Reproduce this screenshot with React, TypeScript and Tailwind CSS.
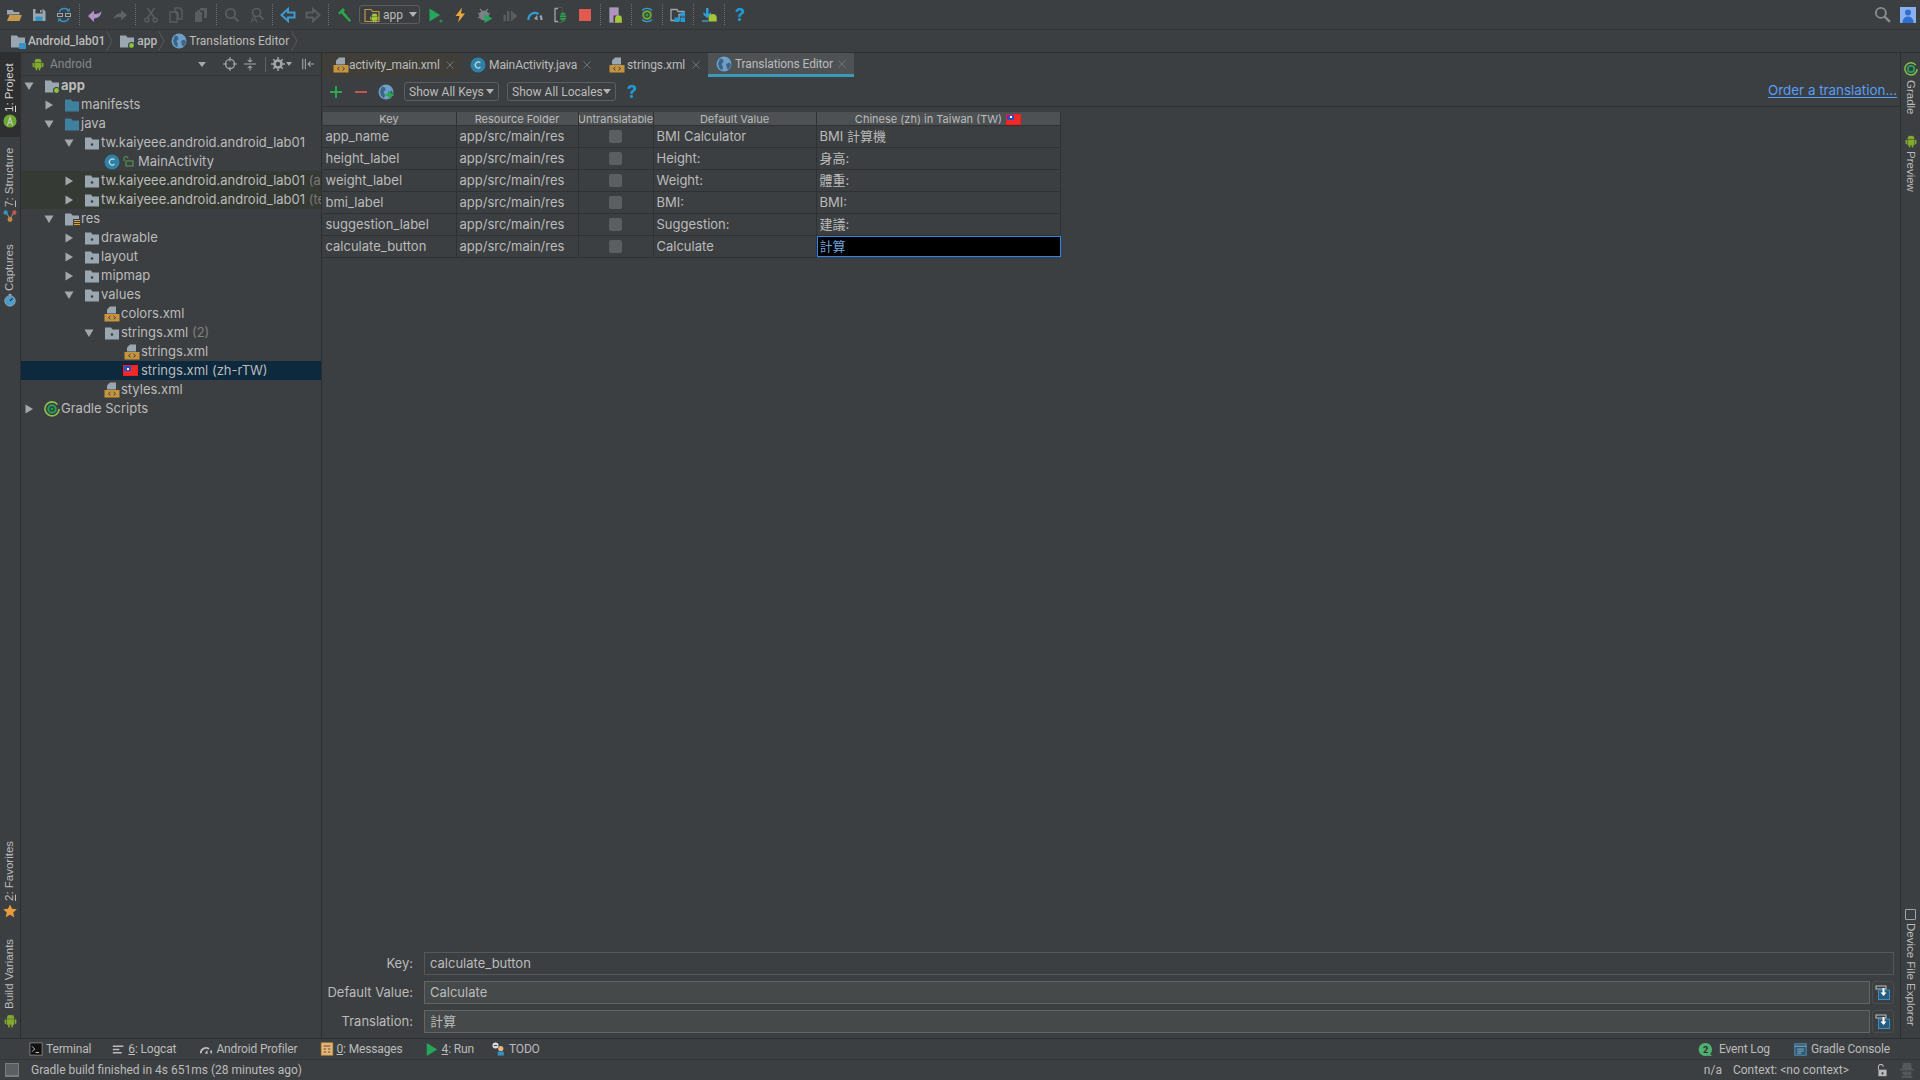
import React from "react";

const G = "#9aa7b0";
const D = "#5a5d5f";

function S({ s = 16, children, className = "" }: { s?: number; children: React.ReactNode; className?: string }) {
  return (
    <svg width={s} height={s} viewBox="0 0 16 16" className={"shrink-0 " + className}>
      {children}
    </svg>
  );
}

function Folder({ c = G, dot, lines, blue }: { c?: string; dot?: boolean; lines?: boolean; blue?: boolean }) {
  return (
    <S>
      <path d="M1 2.5h6l1.5 2H15v10H1z" fill={c} />
      {dot && <circle cx="8" cy="9.5" r="1.3" fill="#3c3f41" />}
      {lines && (
        <>
          <rect x="9" y="8" width="7" height="8" fill="#3c3f41" />
          <path d="M10 9.5h6M10 11.5h6M10 13.5h6" stroke="#e0a030" strokeWidth="1" />
        </>
      )}
      {blue && <rect x="9" y="10" width="7" height="6" fill="#3592c4" />}
    </S>
  );
}

function AppFolder() {
  return (
    <S>
      <path d="M1 2.5h6l1.5 2H15v10H1z" fill={G} />
      <circle cx="12.5" cy="12.5" r="3.5" fill="#3c3f41" />
      <circle cx="12.5" cy="12.5" r="2.4" fill="#8fc23a" />
    </S>
  );
}

function Xml() {
  return (
    <S>
      <path d="M6 0.5h6v7H3V3.5z" fill={G} />
      <rect x="0.5" y="8" width="15" height="7.5" fill="#c7943e" />
      <path d="M6.5 10l-2 1.7 2 1.7M9.5 10l2 1.7-2 1.7" stroke="#3c3f41" strokeWidth="1" fill="none" />
    </S>
  );
}

function ClassIcon() {
  return (
    <S>
      <circle cx="8" cy="8" r="7.5" fill="#2f82a6" />
      <path d="M10.4 5.8a3 3 0 1 0 0 4.4" stroke="#c7dbe5" strokeWidth="1.2" fill="none" />
    </S>
  );
}

function Globe({ s = 16, plus }: { s?: number; plus?: boolean }) {
  return (
    <S s={s}>
      <circle cx="8" cy="8" r="7.5" fill="#6f9ec6" />
      <path d="M4 2.5l3 1 .5 2.5-2 2 1.5 3-1 3.5-3-3-1-4zM10 8l3.5-1.5L15 9l-2 4.5-2-1z" fill="#3a6488" />
      {plus && <path d="M11.5 7v8M7.5 11h8" stroke="#2aa84a" strokeWidth="2" />}
    </S>
  );
}

function Android({ s = 16, c = "#84a92f" }: { s?: number; c?: string }) {
  return (
    <S s={s}>
      <path d="M4 6a4 4 0 0 1 8 0z" fill={c} />
      <path d="M5.2 2l1 1.6M10.8 2l-1 1.6" stroke={c} strokeWidth=".8" />
      <rect x="4" y="6.6" width="8" height="6" fill={c} />
      <rect x="1.8" y="6.6" width="1.6" height="5" rx=".8" fill={c} />
      <rect x="12.6" y="6.6" width="1.6" height="5" rx=".8" fill={c} />
      <rect x="5.4" y="12" width="1.8" height="3.4" rx=".9" fill={c} />
      <rect x="8.8" y="12" width="1.8" height="3.4" rx=".9" fill={c} />
    </S>
  );
}

function Flag() {
  return (
    <span className="flex h-[11px] w-[15px] shrink-0 border border-[#ff1a1a] bg-[#ee2a2a]">
      <span className="flex h-[5px] w-[7px] items-center justify-center bg-[#2c4fc0]">
        <span className="h-[2px] w-[2px] bg-white" />
      </span>
    </span>
  );
}

function Arrow({ open }: { open?: boolean }) {
  return (
    <svg width="10" height="10" viewBox="0 0 10 10" className="shrink-0">
      {open ? <path d="M0.5 1.5h9L5 9z" fill="#a4a7a9" /> : <path d="M1.5 0.5v9L9 5z" fill="#a4a7a9" />}
    </svg>
  );
}

function Sep() {
  return (
    <div className="flex h-full w-[6px] shrink-0 items-center justify-center">
      <div className="h-[21px] w-0 border-l border-dotted border-[#6d7072]" />
    </div>
  );
}

function Btn({ children }: { children: React.ReactNode }) {
  return <div className="flex h-full w-[25px] shrink-0 items-center justify-center">{children}</div>;
}

const Toolbar = () => (
  <div className="flex h-[30px] shrink-0 items-center border-b border-[#323435] pl-[1.5px] pr-[5px]">
    <Btn>
      <S>
        <path d="M1 3h5.5l1.5 2h5.5v2.5H1z" fill={G} />
        <path d="M3.5 8H16l-2.5 6H1z" fill="#c79a4c" />
      </S>
    </Btn>
    <Btn>
      <S>
        <path d="M2 2h10l2.5 2.5V14H2z" fill={G} />
        <rect x="4.5" y="2" width="7" height="4.5" fill="#3c3f41" />
        <rect x="9" y="3" width="1.5" height="2.5" fill={G} />
        <rect x="4.5" y="9.5" width="7" height="4.5" fill="#3592c4" />
      </S>
    </Btn>
    <Btn>
      <S>
        <path d="M3 5a6 6 0 0 1 10-1.5M13 11a6 6 0 0 1-10 1.5" stroke="#3592c4" strokeWidth="1.4" fill="none" />
        <path d="M13.8 1v3.6h-3.6zM2.2 15v-3.6h3.6z" fill="#3592c4" />
        <rect x="1.5" y="6.5" width="5" height="3" fill="none" stroke={G} />
        <rect x="9.5" y="6.5" width="5" height="3" fill="none" stroke={G} />
      </S>
    </Btn>
    <Sep />
    <Btn>
      <S>
        <path d="M7 3.5V7c3 0 5 0 7.5-3-.5 5-3 7-7.5 7.5V15L1 9z" fill="#b490c7" />
      </S>
    </Btn>
    <Btn>
      <S>
        <path d="M9 3v3.5C5 6.5 3 8 1.5 12 4 10 6 9.8 9 10v3.5L15 8z" fill="#5f6264" />
      </S>
    </Btn>
    <Sep />
    <Btn>
      <S>
        <path d="M4.5 1l7 10M11.5 1l-7 10" stroke={D} strokeWidth="1.6" />
        <circle cx="4" cy="13" r="2" fill="none" stroke={D} strokeWidth="1.4" />
        <circle cx="12" cy="13" r="2" fill="none" stroke={D} strokeWidth="1.4" />
      </S>
    </Btn>
    <Btn>
      <S>
        <path d="M2 5h5l2 2v8H2zM7 1h5l2 2v9h-4V6L7 3.5z" fill="none" stroke={D} strokeWidth="1.4" />
      </S>
    </Btn>
    <Btn>
      <S>
        <path d="M2 5h7v10H2z" fill={D} />
        <path d="M7 1h7v10h-3V3.5H7z" fill={D} />
        <rect x="4" y="3" width="3" height="3" fill={D} />
      </S>
    </Btn>
    <Sep />
    <Btn>
      <S>
        <circle cx="6.5" cy="6.5" r="4.7" fill="none" stroke={D} strokeWidth="1.8" />
        <path d="M10 10l4.5 4.5" stroke={D} strokeWidth="2" />
      </S>
    </Btn>
    <Btn>
      <S>
        <circle cx="7.5" cy="5.5" r="4" fill="none" stroke={D} strokeWidth="1.6" />
        <path d="M10.5 8.5l4 4" stroke={D} strokeWidth="1.8" />
        <path d="M2 15.5L5 8l3 7.5M3 13h4" fill="none" stroke={D} strokeWidth="1" />
      </S>
    </Btn>
    <Sep />
    <Btn>
      <S>
        <path d="M8 2L1.5 8 8 14v-3.5h6.5v-5H8z" fill="none" stroke="#3d9bd0" strokeWidth="2" />
      </S>
    </Btn>
    <Btn>
      <S>
        <path d="M8 2l6.5 6L8 14v-3.5H1.5v-5H8z" fill="none" stroke={D} strokeWidth="2" />
      </S>
    </Btn>
    <Sep />
    <Btn>
      <S>
        <path d="M5.5 2.5L2 6l1.5 1.5L5 6l8.5 9 1.5-1.5L7.500 4.500 9 3 7 1z" fill="#2aa84a" />
      </S>
    </Btn>
    <div className="mx-[2.5px] flex h-[19px] w-[61px] shrink-0 items-center rounded-[3px] border border-[#5c5f61] pl-[4px]">
      <span className="relative h-[16px] w-[16px] shrink-0">
        <S>
          <path d="M1 2.5h6l1.5 2H15v10H1z" fill="none" stroke="#c7943e" strokeWidth="1.2" />
        </S>
        <span className="absolute left-[5px] top-[5px]">
          <Android s={11} c="#a4c639" />
        </span>
      </span>
      <span className="ml-[3px] [font-family:Roboto,sans-serif] text-[12px] text-[#bbbbbb]">app</span>
      <svg width="8" height="5" viewBox="0 0 8 5" className="ml-[6px]">
        <path d="M0 0h8L4 5z" fill="#b0b3b5" />
      </svg>
    </div>
    <Btn>
      <S>
        <path d="M2.5 1.5L13 8 2.5 14.5z" fill="#26a65b" />
        <circle cx="14" cy="14" r="1.6" fill="#2d8a4a" />
      </S>
    </Btn>
    <Btn>
      <S>
        <path d="M10 0.5L3.5 9h4L6 15.5 13 6.5H9z" fill="#e9a63c" />
      </S>
    </Btn>
    <Btn>
      <S>
        <circle cx="7" cy="8.5" r="5" fill="#7e8183" />
        <path d="M3 2l2.4 2.6M11 2L8.6 4.6M1 6l2 1M1 11l2-1M13 6l-2 1" stroke="#7e8183" strokeWidth="1.2" />
        <path d="M7.5 7l8 4.5-8 4.5z" fill="#26a65b" />
      </S>
    </Btn>
    <Btn>
      <S>
        <rect x="1.5" y="8" width="2.4" height="6" fill={D} />
        <rect x="5" y="4" width="2.4" height="10" fill={D} />
        <path d="M9 3.5L15.5 9 9 14.5z" fill={D} />
      </S>
    </Btn>
    <Btn>
      <S>
        <path d="M1.500 13a6.500 6.500 0 0 1 10-6" fill="none" stroke="#2f9fd6" strokeWidth="2.2" />
        <path d="M13.3 8.500a6.500 6.500 0 0 1 1.200 4.500" fill="none" stroke={G} strokeWidth="2.2" />
        <path d="M7 12l3-4 .8 5z" fill={G} />
      </S>
    </Btn>
    <Btn>
      <S>
        <path d="M3 1.500h6.500v13H3z" fill="none" stroke={G} strokeWidth="1.3" />
        <rect x="6" y="1" width="4" height="14" fill="#3c3f41" />
        <ellipse cx="11" cy="10" rx="3" ry="4.500" fill="#2aa84a" />
        <path d="M7 8h8M7 10.500h8M7 13h8" stroke="#3c3f41" strokeWidth=".8" />
      </S>
    </Btn>
    <Btn>
      <div className="h-[12px] w-[12px] bg-[#e05a50]" />
    </Btn>
    <Sep />
    <Btn>
      <S>
        <rect x="2" y="1" width="8" height="14" fill="#b490c7" stroke={G} strokeWidth="1.2" />
        <rect x="5.5" y="8.500" width="10" height="7" fill="#3c3f41" />
        <g transform="translate(5 7) scale(.68)">
          <path d="M3 7a5 5 0 0 1 10 0v6H3z" fill="#a4c639" />
        </g>
      </S>
    </Btn>
    <Sep />
    <Btn>
      <S>
        <circle cx="8" cy="8" r="3.800" fill="none" stroke="#6da833" strokeWidth="2" />
        <circle cx="8" cy="8" r="1.500" fill="#22a85c" />
        <path d="M3 3.500a7 7 0 0 1 10 0M3 12.500a7 7 0 0 0 10 0" stroke="#2f9fd6" strokeWidth="1.4" fill="none" />
      </S>
    </Btn>
    <Sep />
    <Btn>
      <S>
        <path d="M1 2.500h6l1 2h6v3H9v6H1z" fill="none" stroke={G} strokeWidth="1.3" />
        <rect x="10.500" y="5.500" width="4.500" height="4" fill="#1f9ddb" />
        <rect x="4.500" y="10.500" width="4.500" height="4.500" fill="#1f9ddb" />
        <rect x="10.500" y="10.500" width="4.500" height="4.500" fill="#1f9ddb" />
      </S>
    </Btn>
    <Sep />
    <Btn>
      <S>
        <path d="M5 1h2.500v6L10 5v3l-3.700 3L2.500 8V5L5 7z" fill="#2f9fd6" />
        <path d="M1 14h6" stroke="#2f9fd6" strokeWidth="1.5" />
        <g transform="translate(7 6.500) scale(.58)">
          <path d="M1 8a7 7 0 0 1 14 0v6H1z" fill="#a4c639" />
        </g>
      </S>
    </Btn>
    <Sep />
    <Btn>
      <span className="text-[18px] font-bold leading-none text-[#1d9bd6]">?</span>
    </Btn>
    <div className="flex-1" />
    <S s={17}>
      <circle cx="6.500" cy="6.500" r="4.700" fill="none" stroke="#8a8d8f" strokeWidth="1.800" />
      <path d="M10 10l5 5" stroke="#8a8d8f" strokeWidth="2.200" />
    </S>
    <div className="ml-[9px] mr-[-0.5px] h-[16px] w-[16px] shrink-0">
      <S>
        <rect width="16" height="16" fill="#8ab0ee" />
        <circle cx="8" cy="5.500" r="3" fill="#2f6ed0" />
        <path d="M2.500 16c0-4.500 2.500-6.500 5.500-6.500s5.500 2 5.500 6.500z" fill="#2f6ed0" />
      </S>
    </div>
  </div>
);

function Chev() {
  return (
    <svg width="7" height="20" viewBox="0 0 7 20" className="shrink-0">
      <path d="M0.500 0L6 10 0.500 20" stroke="#58595b" fill="none" />
    </svg>
  );
}

const NavBar = () => (
  <div className="flex h-[23px] shrink-0 items-center border-b border-[#2e2f30] pl-[10px] [font-family:Roboto,sans-serif] text-[12px]">
    <Folder blue />
    <span className="ml-[2px] font-medium">Android_lab01</span>
    <span className="ml-[1px] mr-[6px]">
      <Chev />
    </span>
    <AppFolder />
    <span className="ml-[2px] font-medium">app</span>
    <span className="ml-[1px] mr-[6px]">
      <Chev />
    </span>
    <Globe />
    <span className="ml-[2px]">Translations Editor</span>
    <span className="ml-[2px]">
      <Chev />
    </span>
  </div>
);

function VText({ h, children }: { h: number; children: React.ReactNode }) {
  return (
    <span
      className="flex rotate-180 items-center justify-start whitespace-nowrap [font-family:'Liberation_Sans',sans-serif] text-[11.5px] [writing-mode:vertical-rl]"
      style={{ height: h }}
    >
      {children}
    </span>
  );
}

const LeftStripe = () => (
  <div className="flex w-[21px] shrink-0 flex-col items-center border-r border-[#2b2d2e] text-[#bbbbbb]">
    <div className="flex h-[84px] w-full flex-col items-center bg-[#2d2f31] pt-[7px] text-[#d4d4d4]">
      <VText h={52}>
        <span>
          <u>1</u>: Project
        </span>
      </VText>
      <span className="mt-[2px]">
        <S s={14}>
          <circle cx="8" cy="8" r="7.500" fill="#6da833" />
          <path d="M5 13l3-9 3 9M6 10h4" stroke="#ccc" strokeWidth="1.200" fill="none" />
        </S>
      </span>
    </div>
    <div className="mt-[11px] flex flex-col items-center">
      <VText h={59}>
        <span>
          <u>7</u>: Structure
        </span>
      </VText>
      <span className="mt-[2px]">
        <S s={14}>
          <path d="M3.500 4L8 11l4.500-7" stroke="#9aa7b0" fill="none" />
          <circle cx="3" cy="4" r="2.500" fill="#3592c4" />
          <circle cx="13" cy="4" r="2.500" fill="#c75450" />
          <circle cx="8" cy="12" r="2.800" fill="#c7873e" />
        </S>
      </span>
    </div>
    <div className="mt-[21px] flex flex-col items-center">
      <VText h={47}>Captures</VText>
      <span className="mt-[2px]">
        <S s={14}>
          <circle cx="8" cy="9" r="6" fill="#4a9ccb" stroke="#9aa7b0" />
          <path d="M8 9l3-3" stroke="#223" strokeWidth="1.200" />
          <rect x="6.500" y="1" width="3" height="2" fill="#9aa7b0" />
        </S>
      </span>
    </div>
    <div className="flex-1" />
    <div className="flex flex-col items-center">
      <VText h={59}>
        <span>
          <u>2</u>: Favorites
        </span>
      </VText>
      <span className="mt-[3px]">
        <S s={14}>
          <path d="M8 .5l2.300 5 5.500.6-4.100 3.700 1.200 5.400L8 12.400 3.100 15.200l1.200-5.400L.2 6.100l5.500-.6z" fill="#e89b3c" />
        </S>
      </span>
    </div>
    <div className="mb-[10px] mt-[21px] flex flex-col items-center">
      <VText h={70}>Build Variants</VText>
      <span className="mt-[4px]">
        <Android s={15} />
      </span>
    </div>
  </div>
);

function TreeRow({
  indent,
  arrow,
  icon,
  children,
}: {
  indent: number;
  arrow?: "open" | "closed";
  icon: React.ReactNode;
  children: React.ReactNode;
}) {
  return (
    <div className="flex h-[19px] items-center overflow-hidden whitespace-nowrap" style={{ paddingLeft: indent }}>
      <span className="flex w-[20px] shrink-0 items-center">{arrow && <Arrow open={arrow === "open"} />}</span>
      <span className="flex w-[17px] shrink-0 items-center">{icon}</span>
      <span>{children}</span>
    </div>
  );
}

const Tree = () => (
  <div className="flex w-[301px] shrink-0 flex-col border-r border-[#2b2d2e] text-[13px]">
    <div className="flex h-[23px] shrink-0 items-center border-b border-[#323435] pl-[10px] text-[#85888a]">
      <Android s={14} />
      <span className="ml-[5px] [font-family:Roboto,sans-serif] text-[12px]">Android</span>
      <svg width="8" height="5" viewBox="0 0 8 5" className="ml-[106px]">
        <path d="M0 0h8L4 5z" fill="#a4a7a9" />
      </svg>
      <span className="ml-[17px]">
        <S s={14}>
          <circle cx="8" cy="8" r="5.200" fill="none" stroke="#a4a7a9" strokeWidth="1.500" />
          <path d="M8 0v5M8 11v5M0 8h5M11 8h5" stroke="#a4a7a9" strokeWidth="1.300" />
        </S>
      </span>
      <span className="ml-[6px]">
        <S s={14}>
          <path d="M1 8h14M8 .5v4.500M8 15.500V11M5.500 3.500L8 5.500l2.500-2M5.500 12.500L8 10.500l2.500 2" stroke="#a4a7a9" strokeWidth="1.200" fill="none" />
        </S>
      </span>
      <div className="ml-[8px] h-[15px] w-[1px] bg-[#606365]" />
      <span className="ml-[5px]">
        <S s={14}>
          <circle cx="8" cy="8" r="4" fill="none" stroke="#a4a7a9" strokeWidth="3" />
          <path d="M8 0v3M8 13v3M0 8h3M13 8h3M2.500 2.500l2 2M11.500 11.500l2 2M2.500 13.500l2-2M11.500 4.500l2-2" stroke="#a4a7a9" strokeWidth="1.600" />
        </S>
      </span>
      <svg width="6" height="4" viewBox="0 0 6 4" className="ml-[1px]">
        <path d="M0 0h6L3 4z" fill="#a4a7a9" />
      </svg>
      <span className="ml-[9px]">
        <S s={14}>
          <path d="M2 2v12M5 2v12M15 8H8M11 5L8 8l3 3" stroke="#a4a7a9" strokeWidth="1.200" fill="none" />
        </S>
      </span>
    </div>
    <div className="flex-1">
      <TreeRow indent={3} arrow="open" icon={<AppFolder />}>
        <span className="font-bold">app</span>
      </TreeRow>
      <TreeRow indent={23} arrow="closed" icon={<Folder c="#40809f" />}>
        manifests
      </TreeRow>
      <TreeRow indent={23} arrow="open" icon={<Folder c="#40809f" />}>
        java
      </TreeRow>
      <TreeRow indent={43} arrow="open" icon={<Folder dot />}>
        tw.kaiyeee.android.android_lab01
      </TreeRow>
      <div className="flex h-[19px] items-center whitespace-nowrap pl-[83px]">
        <ClassIcon />
        <span className="ml-[3px] flex w-[15px] items-center">
          <svg width="11" height="11" viewBox="0 0 11 11" className="shrink-0">
            <rect x="3" y="5" width="7" height="5" fill="none" stroke="#5a9e5a" />
            <path d="M1 5V2.500a2 2 0 0 1 4 0" fill="none" stroke="#5a9e5a" />
          </svg>
        </span>
        MainActivity
      </div>
      <div className="bg-[#363a34]">
        <TreeRow indent={43} arrow="closed" icon={<Folder dot />}>
          tw.kaiyeee.android.android_lab01 <span className="text-[#787878]">(androidTest)</span>
        </TreeRow>
        <TreeRow indent={43} arrow="closed" icon={<Folder dot />}>
          tw.kaiyeee.android.android_lab01 <span className="text-[#787878]">(test)</span>
        </TreeRow>
      </div>
      <TreeRow indent={23} arrow="open" icon={<Folder lines />}>
        res
      </TreeRow>
      <TreeRow indent={43} arrow="closed" icon={<Folder dot />}>
        drawable
      </TreeRow>
      <TreeRow indent={43} arrow="closed" icon={<Folder dot />}>
        layout
      </TreeRow>
      <TreeRow indent={43} arrow="closed" icon={<Folder dot />}>
        mipmap
      </TreeRow>
      <TreeRow indent={43} arrow="open" icon={<Folder dot />}>
        values
      </TreeRow>
      <TreeRow indent={63} icon={<Xml />}>
        colors.xml
      </TreeRow>
      <TreeRow indent={63} arrow="open" icon={<Folder dot />}>
        strings.xml <span className="text-[#808080]">(2)</span>
      </TreeRow>
      <TreeRow indent={83} icon={<Xml />}>
        strings.xml
      </TreeRow>
      <div className="flex h-[19px] items-center whitespace-nowrap bg-[#0d293e] pl-[102px]">
        <span className="mr-[3px] flex">
          <Flag />
        </span>
        strings.xml (zh-rTW)
      </div>
      <TreeRow indent={63} icon={<Xml />}>
        styles.xml
      </TreeRow>
      <TreeRow indent={3} arrow="closed" icon={<Gradle />}>
        Gradle Scripts
      </TreeRow>
    </div>
  </div>
);

function Gradle() {
  return (
    <S>
      <path d="M13.500 3.500A7 7 0 1 0 15 8" fill="none" stroke="#8cc04b" strokeWidth="1.600" />
      <circle cx="8" cy="8" r="3.700" fill="none" stroke="#1fa35a" strokeWidth="2" />
      <circle cx="8" cy="8" r="1.200" fill="#1fa35a" />
    </S>
  );
}

function Close() {
  return (
    <svg width="8" height="8" viewBox="0 0 8 8" className="shrink-0">
      <path d="M.5.5l7 7M7.500.5l-7 7" stroke="#6e7173" />
    </svg>
  );
}

const Tabs = () => (
  <div className="flex h-[24px] shrink-0 items-stretch whitespace-nowrap [font-family:Roboto,sans-serif] text-[12px] tracking-[-0.1px]">
    <div className="flex h-[24px] w-[139px] items-center bg-[#3f3e38] pl-[11px]">
      <Xml />
      <span>activity_main.xml</span>
      <span className="ml-auto mr-[7px]">
        <Close />
      </span>
    </div>
    <div className="flex h-[24px] w-[139px] items-center pl-[9px]">
      <ClassIcon />
      <span className="ml-[3px]">MainActivity.java</span>
      <span className="ml-auto mr-[9px]">
        <Close />
      </span>
    </div>
    <div className="flex h-[24px] w-[108px] items-center pl-[9px]">
      <Xml />
      <span className="ml-[2px]">strings.xml</span>
      <span className="ml-auto mr-[8px]">
        <Close />
      </span>
    </div>
    <div className="flex h-[24px] w-[146px] items-center border-b-[3px] border-[#3a9bb8] bg-[#4e5254] pl-[8px]">
      <Globe />
      <span className="ml-[3px]">Translations Editor</span>
      <span className="ml-auto mr-[8px]">
        <Close />
      </span>
    </div>
  </div>
);

function Drop({ w, label }: { w: number; label: string }) {
  return (
    <div
      className="flex h-[19px] shrink-0 items-center justify-between whitespace-nowrap rounded-[3px] border border-[#5c5f61] px-[4px] [font-family:Roboto,sans-serif] text-[12px]"
      style={{ width: w }}
    >
      <span>{label}</span>
      <svg width="8" height="5" viewBox="0 0 8 5">
        <path d="M0 0h8L4 5z" fill="#b0b3b5" />
      </svg>
    </div>
  );
}

const EditorBar = () => (
  <div className="flex h-[30px] shrink-0 items-center border-b border-[#2f3133] pl-[6px] pr-[3px]">
    <S>
      <path d="M8 2v12M2 8h12" stroke="#2aa84a" strokeWidth="2" />
    </S>
    <span className="ml-[9px]">
      <S>
        <path d="M2 8h12" stroke="#c75450" strokeWidth="2" />
      </S>
    </span>
    <span className="ml-[9px]">
      <Globe plus />
    </span>
    <span className="ml-[10px]">
      <Drop w={95} label="Show All Keys" />
    </span>
    <span className="ml-[8px]">
      <Drop w={109} label="Show All Locales" />
    </span>
    <span className="ml-[11px] text-[18px] font-bold leading-none text-[#1d9bd6]">?</span>
    <div className="flex-1" />
    <a className="mb-[2px] text-[13.4px] text-[#589df6] underline underline-offset-2">Order a translation...</a>
  </div>
);

const rows = [
  ["app_name", "BMI Calculator", "BMI 計算機"],
  ["height_label", "Height:", "身高:"],
  ["weight_label", "Weight:", "體重:"],
  ["bmi_label", "BMI:", "BMI:"],
  ["suggestion_label", "Suggestion:", "建議:"],
  ["calculate_button", "Calculate", "計算"],
];

const Cell = ({ children, cls = "" }: { children: React.ReactNode; cls?: string }) => (
  <div className={"flex h-[22px] items-center overflow-hidden whitespace-nowrap border-b border-r border-[#2f3133] pl-[3px] " + cls}>{children}</div>
);

const Head = ({ children }: { children: React.ReactNode }) => (
  <div className="flex h-[14px] items-center justify-center overflow-hidden whitespace-nowrap border-b border-r border-[#2f3133] bg-[#4d5153] pt-[1px] text-[11px]">
    {children}
  </div>
);

const Table = () => (
  <div className="ml-[0.5px] mt-[5px] grid w-[738px] grid-cols-[134px_122px_75px_163px_244px] text-[13px]">
    <Head>Key</Head>
    <Head>Resource Folder</Head>
    <Head>Untranslatable</Head>
    <Head>Default Value</Head>
    <Head>
      <span className="mr-[4px]">Chinese (zh) in Taiwan (TW)</span>
      <Flag />
    </Head>
    {rows.map((r, i) => (
      <React.Fragment key={r[0]}>
        <Cell>{r[0]}</Cell>
        <Cell>app/src/main/res</Cell>
        <Cell cls="justify-center !pl-0">
          <div className="mb-[1px] h-[13px] w-[13px] rounded-[2px] bg-[#5c5f61]" />
        </Cell>
        <Cell>{r[1]}</Cell>
        {i === 5 ? (
          <div className="flex h-[21px] items-center border border-[#2e86ee] bg-black pl-[2px] text-[#6ea3dc]">{r[2]}</div>
        ) : (
          <Cell>{r[2]}</Cell>
        )}
      </React.Fragment>
    ))}
  </div>
);

function Save() {
  return (
    <div className="flex h-[23px] w-[22px] shrink-0 items-center justify-center rounded-[3px] border border-[#4a4d4f]">
      <S>
        <rect x="1" y="1" width="10" height="3" fill="#3c3f41" stroke="#c0c0c0" />
        <rect x="3.500" y="5" width="11" height="9.500" fill="#2d5a78" stroke="#3592c4" />
        <path d="M8.500 3v6" stroke="#fff" strokeWidth="2" />
        <path d="M5.500 7.500h6L8.500 11z" fill="#fff" />
      </S>
    </div>
  );
}

const Form = () => (
  <div className="flex flex-col gap-[6px] pb-[5px] pr-[6px] text-[13px]">
    <div className="flex items-center">
      <span className="w-[91px] shrink-0 text-right">Key:</span>
      <div className="ml-[11px] flex h-[23px] flex-1 items-center border border-[#55585a] pl-[5px]">calculate_button</div>
    </div>
    <div className="flex items-center">
      <span className="w-[91px] shrink-0 text-right">Default Value:</span>
      <div className="ml-[11px] flex h-[23px] flex-1 items-center border border-[#646464] bg-[#45494a] pl-[5px]">Calculate</div>
      <span className="ml-[2px]">
        <Save />
      </span>
    </div>
    <div className="flex items-center">
      <span className="w-[91px] shrink-0 text-right">Translation:</span>
      <div className="ml-[11px] flex h-[23px] flex-1 items-center border border-[#646464] bg-[#45494a] pl-[5px]">計算</div>
      <span className="ml-[2px]">
        <Save />
      </span>
    </div>
  </div>
);

const RightStripe = () => (
  <div className="flex w-[20px] shrink-0 flex-col items-center border-l border-[#2b2d2e] pt-[9px]">
    <S s={14}>
      <path d="M13.500 3.500A7 7 0 1 0 15 8" fill="none" stroke="#8cc04b" strokeWidth="1.600" />
      <circle cx="8" cy="8" r="3.700" fill="none" stroke="#1fa35a" strokeWidth="2" />
    </S>
    <span className="mt-[4px] whitespace-nowrap [font-family:'Liberation_Sans',sans-serif] text-[11.5px] [writing-mode:vertical-rl]">Gradle</span>
    <span className="mt-[19px] flex">
      <Android s={14} />
    </span>
    <span className="mt-[3px] whitespace-nowrap [font-family:'Liberation_Sans',sans-serif] text-[11.5px] [writing-mode:vertical-rl]">Preview</span>
    <div className="flex-1" />
    <span className="mb-[3px] h-[11px] w-[11px] rounded-[1px] border border-[#9aa7b0]" />
    <span className="mb-[12px] whitespace-nowrap [font-family:'Liberation_Sans',sans-serif] text-[11.5px] [writing-mode:vertical-rl]">Device File Explorer</span>
  </div>
);

const ToolTab = ({ icon, children, ml }: { icon: React.ReactNode; children: React.ReactNode; ml: number }) => (
  <div className="flex items-center" style={{ marginLeft: ml }}>
    {icon}
    <span className="ml-[3px]">{children}</span>
  </div>
);

const BottomBar = () => (
  <div className="flex h-[22px] shrink-0 items-center border-b border-[#323435] border-t border-t-[#2b2d2e] pr-[30px] [font-family:Roboto,sans-serif] text-[12px] tracking-[-0.15px]">
    <ToolTab
      ml={29}
      icon={
        <S s={14}>
          <rect x="1" y="1" width="14" height="14" fill="#111" stroke="#888" />
          <path d="M3.500 5l3 3-3 3M7.500 12h4" stroke="#ddd" fill="none" />
        </S>
      }
    >
      Terminal
    </ToolTab>
    <ToolTab
      ml={21}
      icon={
        <S s={13}>
          <path d="M1 4h13M1 8h8M1 12h11" stroke="#bbb" strokeWidth="2" />
        </S>
      }
    >
      <u>6</u>: Logcat
    </ToolTab>
    <ToolTab
      ml={23}
      icon={
        <S s={14}>
          <path d="M2 13a6 6 0 0 1 9.500-5" fill="none" stroke="#bbb" strokeWidth="2" />
          <path d="M13.500 9.500a6 6 0 0 1 .5 3.500" fill="none" stroke="#bbb" strokeWidth="2" />
          <path d="M6.500 13l3-4 .5 4.500z" fill="#bbb" />
        </S>
      }
    >
      Android Profiler
    </ToolTab>
    <ToolTab
      ml={22}
      icon={
        <S s={14}>
          <rect x="1.500" y="1" width="13" height="14" fill="#e8b87a" stroke="#c7943e" />
          <path d="M4 4.500h8M4 8h3M9 8h3M4 11.500h3M9 11.500h3" stroke="#5a4a30" strokeWidth="1.200" />
        </S>
      }
    >
      <u>0</u>: Messages
    </ToolTab>
    <ToolTab
      ml={22}
      icon={
        <S s={14}>
          <path d="M2 1l12 7.500L2 16z" fill="#26a65b" />
        </S>
      }
    >
      <u>4</u>: Run
    </ToolTab>
    <ToolTab
      ml={18}
      icon={
        <S s={14}>
          <circle cx="4" cy="4" r="3.500" fill="#ddd" />
          <path d="M2 4h4" stroke="#333" />
          <circle cx="10" cy="7.500" r="3" fill="#e8b87a" />
          <rect x="6.500" y="11" width="7" height="4.500" fill="#3592c4" />
        </S>
      }
    >
      TODO
    </ToolTab>
    <div className="flex-1" />
    <div className="flex items-center">
      <S s={15}>
        <path d="M8 1a7 7 0 0 1 5 11.800L15 15l-5-.4A7 7 0 1 1 8 1z" fill="#4fb06f" />
        <text x="8" y="11.500" textAnchor="middle" fontSize="10" fontWeight="700" fill="#2b2d2e">
          2
        </text>
      </S>
      <span className="ml-[6px]">Event Log</span>
    </div>
    <div className="ml-[24px] flex items-center">
      <S s={13}>
        <rect x="1" y="1" width="14" height="14" fill="#2a5a78" stroke="#5d9ac0" />
        <path d="M1 4h14M4 7.500h8M4 10h8M4 12.500h5" stroke="#a9bbc8" />
      </S>
      <span className="ml-[4px]">Gradle Console</span>
    </div>
  </div>
);

const Status = () => (
  <div className="flex h-[20px] shrink-0 items-center pl-[5px] pr-[5px] [font-family:Roboto,sans-serif] text-[12px]">
    <div className="h-[14px] w-[14px] border border-[#7a7d7f] border-b-[2px] bg-[#5c5f61]" />
    <span className="ml-[12px]">Gradle build finished in 4s 651ms (28 minutes ago)</span>
    <div className="flex-1" />
    <span>n/a</span>
    <span className="ml-[11px]">Context: &lt;no context&gt;</span>
    <span className="ml-[27px]">
      <S s={13}>
        <rect x="3" y="7" width="10" height="8" fill="#bbb" />
        <path d="M3 7V3.500a3 3 0 0 1 6 0" fill="none" stroke="#bbb" strokeWidth="1.300" />
        <rect x="7" y="10" width="2" height="3" fill="#3c3f41" />
      </S>
    </span>
    <span className="ml-[10px]">
      <S>
        <path d="M4 1h8l1 6h2v1.500H1V7h2zM3.500 9.500h9V12l-1.500 1.500H5L3.500 12zM2.500 14h11v2h-11z" fill="#55585a" />
      </S>
    </span>
  </div>
);

export default function App() {
  return (
    <div className="flex h-[1080px] w-[1920px] flex-col overflow-hidden bg-[#3c3f41] text-[#bbbbbb] [font-family:Inter,'Noto_Sans_CJK_TC',sans-serif]">
      <Toolbar />
      <NavBar />
      <div className="flex min-h-0 flex-1">
        <LeftStripe />
        <Tree />
        <div className="flex min-w-0 flex-1 flex-col">
          <Tabs />
          <EditorBar />
          <Table />
          <div className="flex-1" />
          <Form />
        </div>
        <RightStripe />
      </div>
      <BottomBar />
      <Status />
    </div>
  );
}
